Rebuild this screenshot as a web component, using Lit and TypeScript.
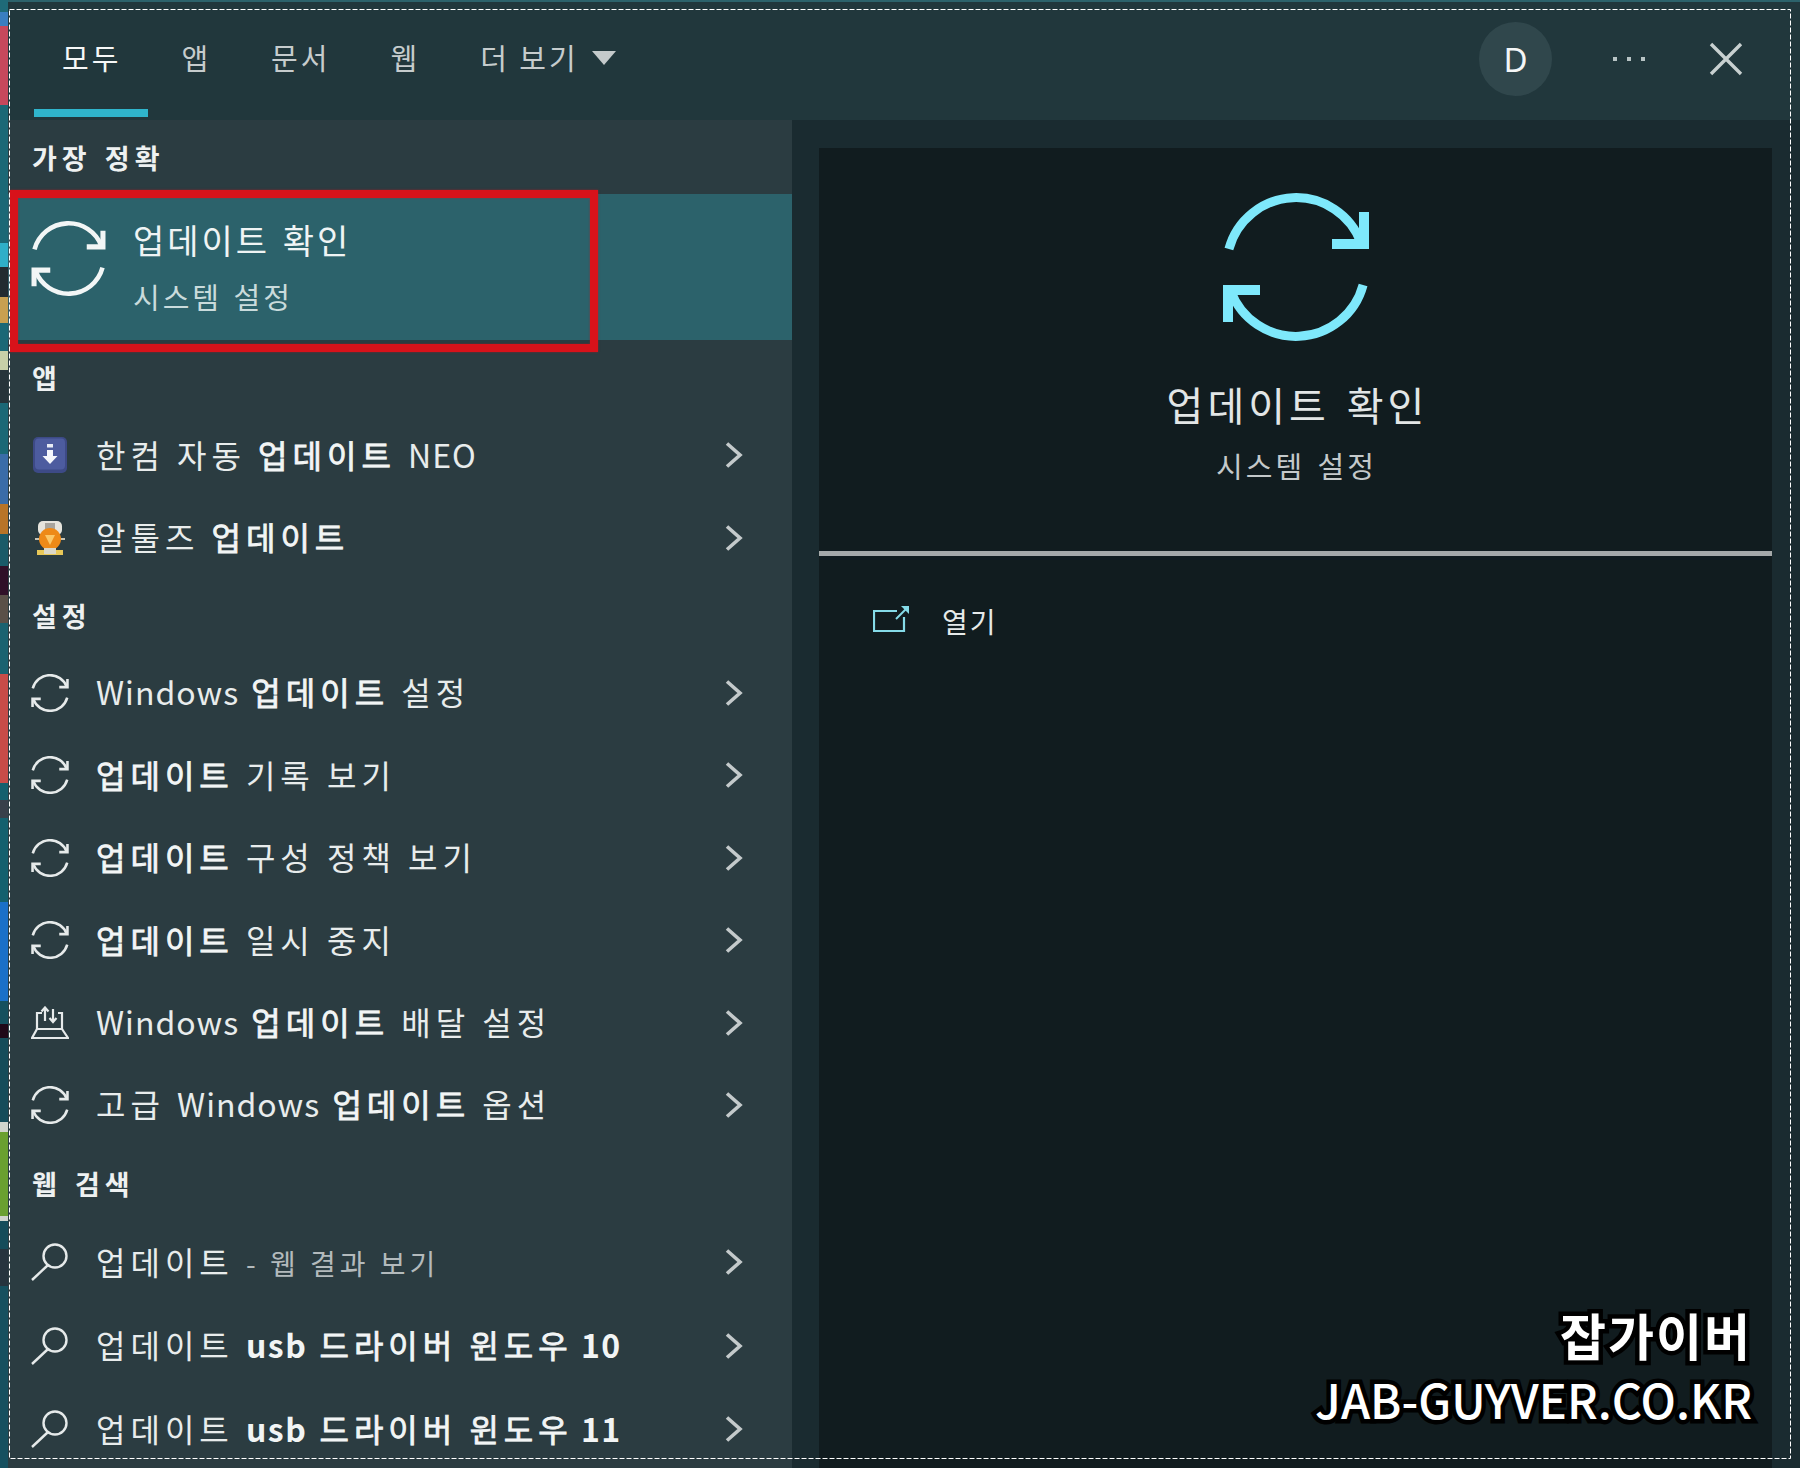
import { LitElement, html, css, svg } from "lit";
import { customElement } from "lit/decorators.js";

const ARC = "M6.900 56A69.500 69.500 0 0 1 139.200 50";
const syncLine = (w: number) => svg`
  <path d=${ARC} stroke="currentColor" stroke-width=${w}/>
  <path d="M147 19V56H110V46H137V19Z" fill="currentColor"/>
  <g transform="rotate(180 74 74)">
    <path d=${ARC} stroke="currentColor" stroke-width=${w}/>
    <path d="M147 19V56H110V46H137V19Z" fill="currentColor"/>
  </g>`;

const syncIcon = (size: number, cls: string) =>
  html`<svg class=${cls} width=${size} height=${size} viewBox="0 0 148 148" fill="none">${syncLine(9)}</svg>`;

const smallSync = () =>
  html`<svg class="ic" width="38" height="38" viewBox="0 0 148 148" fill="none">${syncLine(10)}</svg>`;

const searchIcon = () => html`<svg class="ic" width="38" height="38" viewBox="0 0 38 38" fill="none" stroke="currentColor" stroke-width="2.4">
  <ellipse cx="24" cy="13" rx="11.500" ry="11.500"/><path d="M16.500 22.500L1 37"/>
</svg>`;

const deliveryIcon = () => html`<svg class="ic" width="38" height="34" viewBox="0 0 38 34" fill="none" stroke="currentColor" stroke-width="2.2">
  <path d="M11 7H6V23H31V7H27"/><path d="M6 23L1 32H37L31 23"/>
  <path d="M14 2V15M10.500 5.500L14 1.500L17.500 5.500"/><path d="M22 3V16M18.500 12L22 16L25.500 12"/>
</svg>`;

const hancomIcon = () => html`<svg class="ic" width="34" height="36" viewBox="0 0 34 36">
  <rect x="0" y="0" width="34" height="36" rx="5" fill="#3d4a86"/>
  <rect x="2" y="1.500" width="30" height="31" rx="4" fill="#4d5c9f"/>
  <rect x="14" y="7" width="6" height="3.500" fill="#e8ecf6"/>
  <path d="M14 13H20V19H24.500L17 27L9.500 19H14Z" fill="#f4f6fb"/>
</svg>`;

const alIcon = () => html`<svg class="ic" width="34" height="36" viewBox="0 0 34 36">
  <rect x="5" y="1" width="24" height="14" rx="5" fill="#e6e4dc"/>
  <rect x="12" y="3" width="10" height="7" fill="#a8a49c"/>
  <circle cx="17" cy="19" r="11" fill="#ee8a18"/>
  <path d="M12 15H22L17 25Z" fill="#fcc868"/>
  <path d="M2 19H6M28 19H32" stroke="#c8c4b4" stroke-width="2"/>
  <rect x="4" y="30" width="26" height="5" fill="#e8c858"/>
  <rect x="11" y="28" width="12" height="6" fill="#dcd8c8"/>
</svg>`;

const chevron = html`<svg class="chev" width="18" height="26" viewBox="0 0 18 26" fill="none" stroke="#c4cacb" stroke-width="3.6"><path d="M2 1.500L15 13L2 24.500"/></svg>`;

const strip: [number, string][] = [
  [12, "#1f6a78"], [14, "#3a7ec0"], [79, "#c6485c"], [138, "#1b6876"], [24, "#2fafc8"], [30, "#222b30"],
  [26, "#c8a050"], [28, "#1b6876"], [19, "#c8d0a8"], [33, "#26343a"], [51, "#1b6876"], [50, "#3a6ca8"],
  [30, "#b87428"], [32, "#1a5a68"], [29, "#301028"], [28, "#5a5048"], [51, "#1a6270"], [109, "#c84c48"],
  [17, "#14606e"], [18, "#38404a"], [84, "#14606e"], [99, "#1a70c8"], [23, "#15505e"], [14, "#200818"],
  [84, "#154c5a"], [10, "#d0d4cc"], [84, "#6aa030"], [5, "#d0d4cc"], [28, "#154c5a"], [37, "#26343e"], [182, "#16505f"],
];

type Row = { icon: any; text: any };
const b = (t: string) => html`<span class="b">${t}</span>`;
const win = html`<span class="l">Windows</span>`;

const apps: Row[] = [
  { icon: hancomIcon(), text: html`한컴 자동 ${b("업데이트")} <span class="l">NEO</span>` },
  { icon: alIcon(), text: html`알툴즈 ${b("업데이트")}` },
];
const settings: Row[] = [
  { icon: smallSync(), text: html`${win} ${b("업데이트")} 설정` },
  { icon: smallSync(), text: html`${b("업데이트")} 기록 보기` },
  { icon: smallSync(), text: html`${b("업데이트")} 구성 정책 보기` },
  { icon: smallSync(), text: html`${b("업데이트")} 일시 중지` },
  { icon: deliveryIcon(), text: html`${win} ${b("업데이트")} 배달 설정` },
  { icon: smallSync(), text: html`고급 ${win} ${b("업데이트")} 옵션` },
];
const web: Row[] = [
  { icon: searchIcon(), text: html`업데이트 <span class="dim">- 웹 결과 보기</span>` },
  { icon: searchIcon(), text: html`업데이트 <span class="lb">usb</span> ${b("드라이버 윈도우")} <span class="lb n">10</span>` },
  { icon: searchIcon(), text: html`업데이트 <span class="lb">usb</span> ${b("드라이버 윈도우")} <span class="lb n">11</span>` },
];

@customElement("app-root")
export class AppRoot extends LitElement {
  static styles = css`
    :host {
      display: block;
      width: 1800px;
      height: 1468px;
      position: relative;
      overflow: hidden;
      background: #1a2b30;
      font-family: "Noto Sans CJK KR", "Noto Sans", sans-serif;
      color: #f0f3f3;
    }
    .shell { display: flex; height: 1468px; }
    .strip { width: 8px; flex: none; display: flex; flex-direction: column; }
    .win { flex: 1; min-width: 0; display: flex; flex-direction: column; }
    .topline { height: 2px; background: #2c626b; flex: none; }
    .bar {
      height: 118px;
      flex: none;
      background: #21373c;
      display: flex;
      padding-left: 26px;
    }
    .tab {
      height: 118px;
      box-sizing: border-box;
      padding: 0 28px 8px;
      margin-right: 4px;
      display: flex;
      align-items: center;
      font-size: 29px;
      letter-spacing: 3px;
      color: #c6cccd;
      gap: 13px;
    }
    .tab svg { margin-top: 2px; }
    .tab.on { color: #f5f7f7; position: relative; }
    .tab.on::after {
      content: "";
      position: absolute;
      left: 0;
      right: 1px;
      bottom: 3px;
      height: 8px;
      background: #2fb5cc;
    }
    .tools { margin-left: auto; display: flex; align-items: center; padding-bottom: 4px; }
    .avatar {
      width: 73px;
      height: 74px;
      border-radius: 50%;
      background: #30474c;
      display: flex;
      align-items: center;
      justify-content: center;
      font-size: 33px;
      font-family: "Noto Sans", sans-serif;
      margin-right: 61px;
      color: #f4f6f6;
    }
    .dots { display: flex; gap: 10px; margin-right: 64px; }
    .dots i { width: 4px; height: 4px; background: #b8c4c5; display: block; }
    .close { margin-right: 57px; display: block; }
    .body { flex: 1; min-height: 0; display: flex; }
    .left { width: 784px; flex: none; background: #2b3c41; }
    .head {
      height: 74px;
      display: flex;
      align-items: center;
      padding-left: 24px;
      font-size: 27px;
      font-weight: 700;
      letter-spacing: 5px;
      word-spacing: 2px;
      color: #eef1f1;
    }
    .head.short { height: 73px; }
    .head.tall { height: 75px; }
    .hero {
      height: 146px;
      background: #2c626b;
      position: relative;
      display: flex;
      align-items: flex-start;
      padding: 23px 0 0 23px;
      box-sizing: border-box;
      gap: 27px;
    }
    .hero-ic { color: #f2f6f6; margin-top: 4px; flex: none; display: block; }
    .hero-t { font-size: 34px; line-height: 46px; letter-spacing: 3px; word-spacing: 2px; color: #eff4f4; }
    .hero-s { font-size: 29px; line-height: 40px; letter-spacing: 3px; word-spacing: 2px; margin-top: 13px; color: #c9dbdc; }
    .redbox {
      position: absolute;
      left: 2px;
      top: -4px;
      width: 588px;
      height: 162px;
      box-sizing: border-box;
      border: 8px solid #d8121a;
      box-shadow: 0 0 2px rgba(200, 20, 30, 0.6), inset 0 0 2px rgba(200, 20, 30, 0.6);
    }
    .row {
      height: 82.4px;
      display: flex;
      align-items: center;
      padding: 0 49px 0 23px;
      box-sizing: border-box;
      color: #e6eaea;
    }
    .row.w + .row.w { margin-top: 1px; }
    .ico { width: 38px; margin-right: 27px; flex: none; display: flex; justify-content: center; color: #e6eaea; }
    .ic { display: block; }
    .txt { flex: 1; font-size: 32px; letter-spacing: 5px; word-spacing: 0; white-space: nowrap; color: #e8ecec; padding-bottom: 3px; }
    .b { -webkit-text-stroke: 0.8px #f2f5f5; color: #f2f5f5; }
    .l { letter-spacing: 1px; }
    .lb { font-weight: 700; letter-spacing: 1.5px; color: #f2f5f5; }
    .lb.n { margin-left: -4px; }
    .dim { font-size: 28px; letter-spacing: 4px; color: #b3babc; }
    .chev { display: block; flex: none; }
    .gut { width: 27px; flex: none; }
    .right {
      width: 953px;
      flex: none;
      margin-top: 28px;
      background: #111c1f;
      display: flex;
      flex-direction: column;
      align-items: center;
      padding-top: 45px;
      box-sizing: border-box;
    }
    .big { color: #7ee8fb; display: block; flex: none; }
    .r-t { margin-top: 38px; padding-left: 4px; font-size: 40px; line-height: 50px; letter-spacing: 4px; word-spacing: 4px; color: #e2e6e6; }
    .r-s { margin-top: 16px; padding-left: 2px; font-size: 29px; line-height: 40px; letter-spacing: 3px; word-spacing: 3px; color: #c4c9ca; }
    .rule { margin-top: 66px; height: 5px; align-self: stretch; background: #a5a9a9; flex: none; }
    .open { margin-top: 43px; align-self: stretch; height: 40px; display: flex; align-items: center; padding-left: 54px; gap: 33px; }
    .open span { font-size: 28px; letter-spacing: 2px; color: #e6eaea; padding-top: 4px; }
    .wm {
      position: absolute;
      right: 48px;
      top: 1306px;
      text-align: right;
      color: #fff;
      font-weight: 700;
      paint-order: stroke fill;
      -webkit-text-stroke: 9px #000;
    }
    .wm div:first-child { font-size: 50px; line-height: 56px; letter-spacing: 2px; }
    .wm div:last-child { font-size: 47px; line-height: 56px; margin-top: 9px; font-weight: 500; }
    .dash { position: absolute; left: 0; top: 0; pointer-events: none; display: block; }
  `;

  private rows(list: Row[], cls = "row") {
    return list.map(
      (r) => html`<div class=${cls}><div class="ico">${r.icon}</div><div class="txt">${r.text}</div>${chevron}</div>`
    );
  }

  render() {
    return html`
      <div class="shell">
        <div class="strip">${strip.map(([h, c]) => html`<div style="height:${h}px;background:${c}"></div>`)}</div>
        <div class="win">
          <div class="topline"></div>
          <div class="bar">
            <div class="tab on">모두</div>
            <div class="tab">앱</div>
            <div class="tab">문서</div>
            <div class="tab">웹</div>
            <div class="tab">더 보기
              <svg width="24" height="14" viewBox="0 0 24 14"><path d="M0 0H24L12 14Z" fill="#c4cacb"/></svg>
            </div>
            <div class="tools">
              <div class="avatar">D</div>
              <div class="dots"><i></i><i></i><i></i></div>
              <svg class="close" width="34" height="34" viewBox="0 0 34 34" fill="none" stroke="#c8d0d0" stroke-width="3.4"><path d="M2 2L32 32M32 2L2 32"/></svg>
            </div>
          </div>
          <div class="body">
            <div class="left">
              <div class="head">가장 정확</div>
              <div class="hero">
                ${syncIcon(75, "hero-ic")}
                <div>
                  <div class="hero-t">업데이트 확인</div>
                  <div class="hero-s">시스템 설정</div>
                </div>
                <div class="redbox"></div>
              </div>
              <div class="head">앱</div>
              ${this.rows(apps)}
              <div class="head short">설정</div>
              ${this.rows(settings)}
              <div class="head tall">웹 검색</div>
              ${this.rows(web, "row w")}
            </div>
            <div class="gut"></div>
            <div class="right">
              ${syncIcon(148, "big")}
              <div class="r-t">업데이트 확인</div>
              <div class="r-s">시스템 설정</div>
              <div class="rule"></div>
              <div class="open">
                <svg width="36" height="26" viewBox="0 0 36 26" fill="none" stroke="#85dbe8" stroke-width="2.2"><path d="M24 5H1V25H31V11"/><path d="M23 13L33 3" stroke-width="2"/><path d="M28 0H36V8Z" fill="#85dbe8" stroke="none"/></svg>
                <span>열기</span>
              </div>
            </div>
          </div>
        </div>
      </div>
      <div class="wm"><div>잡가이버</div><div>JAB-GUYVER.CO.KR</div></div>
      <svg class="dash" width="1800" height="1468" fill="none">${svg`<rect x="9.5" y="9.5" width="1781" height="1449" stroke="#fff" stroke-dasharray="5 2"/>`}</svg>
    `;
  }
}
